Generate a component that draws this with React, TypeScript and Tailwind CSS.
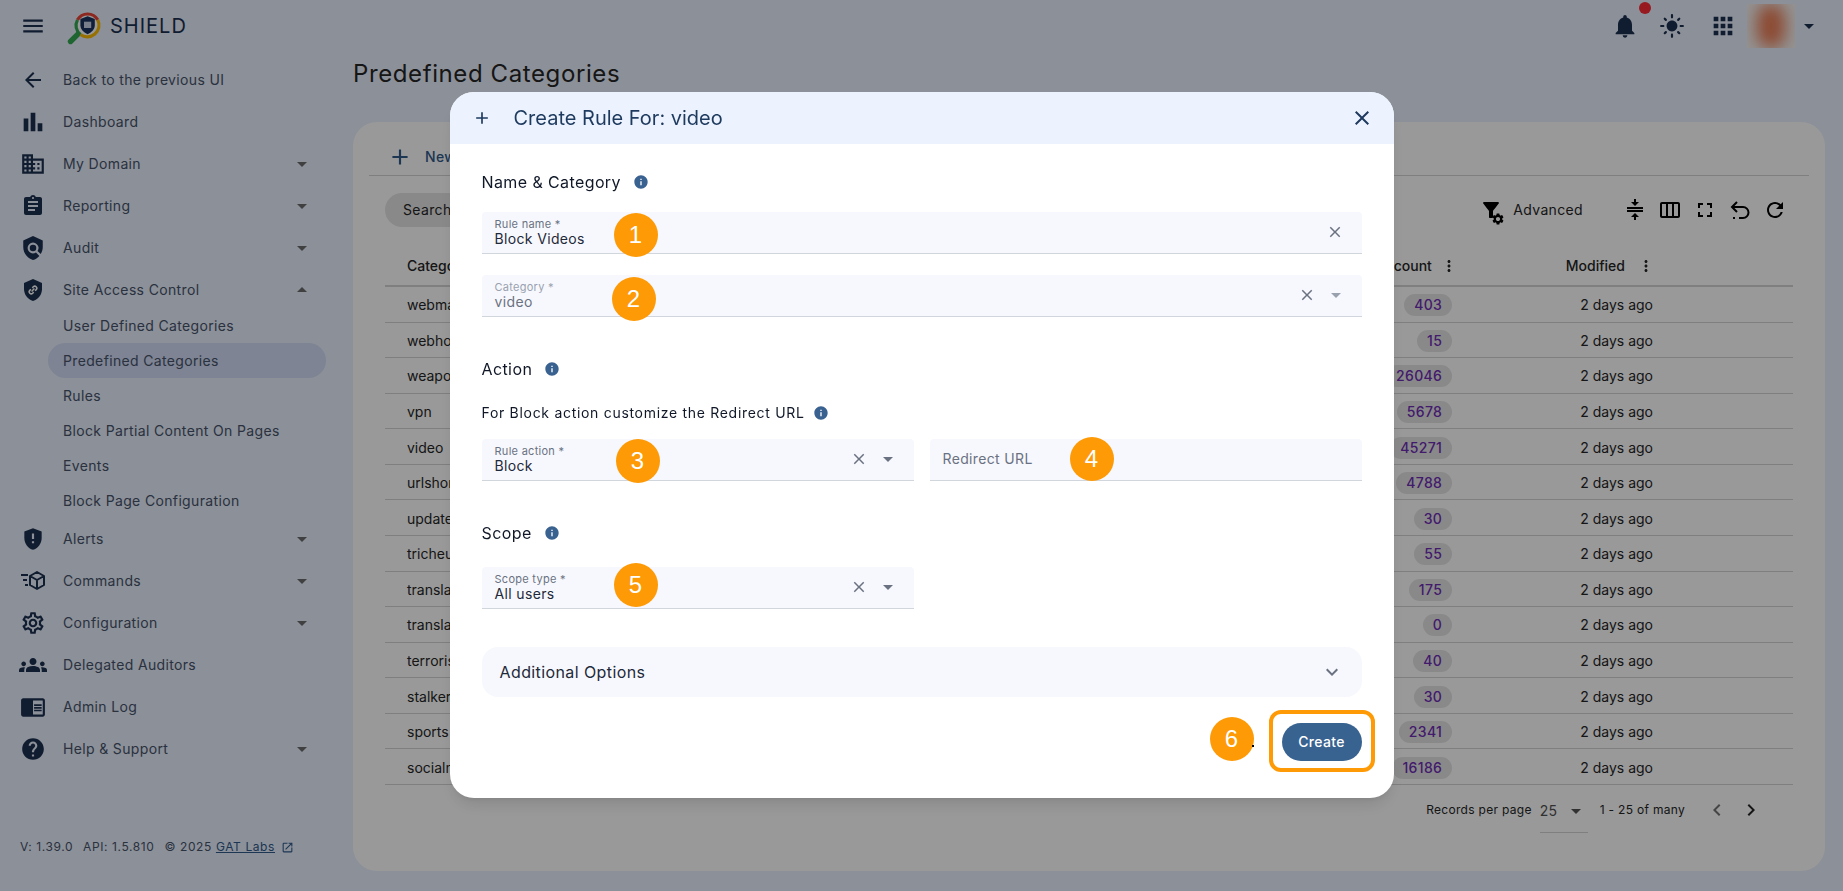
import type { ReactNode } from "react";
import {
  MdAdd,
  MdApps,
  MdArrowBack,
  MdArrowDropDown,
  MdArrowDropUp,
  MdAssignment,
  MdBarChart,
  MdChevronLeft,
  MdChevronRight,
  MdChromeReaderMode,
  MdClose,
  MdCompress,
  MdDomain,
  MdExpandMore,
  MdFilterAlt,
  MdFullscreen,
  MdGppMaybe,
  MdGroups,
  MdHelp,
  MdInfo,
  MdLightMode,
  MdMenu,
  MdMoreVert,
  MdNotifications,
  MdOpenInNew,
  MdOutlineSettings,
  MdOutlineViewWeek,
  MdPolicy,
  MdRefresh,
  MdSettings,
  MdShield,
} from "react-icons/md";

const font = { fontFamily: "Inter, 'Noto Sans', sans-serif" };

function ShieldLogo() {
  return (
    <svg viewBox="0 0 40 40" className="h-9 w-9">
      <path d="M13 27 L5 35" stroke="#34a853" strokeWidth="6" strokeLinecap="round" />
      <circle cx="24" cy="17" r="13" fill="#fff" />
      <path d="M12.7 11 A13 13 0 0 1 35.3 11" fill="none" stroke="#ea4335" strokeWidth="3.5" />
      <path d="M35.3 11 A13 13 0 0 1 16 27.3" fill="none" stroke="#fbbc04" strokeWidth="3.5" />
      <path d="M16 27.3 A13 13 0 0 1 12.7 11" fill="none" stroke="#34a853" strokeWidth="3.5" />
      <path d="M24 7 L32 10 V17 C32 22 28 25 24 27 C20 25 16 22 16 17 V10 Z" fill="#1c3560" />
      <path d="M20 13 H28 V20 H20 Z" fill="#c9d3e6" />
    </svg>
  );
}

function LinkShield() {
  return (
    <div className="relative flex h-6 w-6 items-center justify-center">
      <MdShield size={26} />
      <svg viewBox="0 0 24 24" className="absolute h-3 w-3 -rotate-45 text-white" fill="none" stroke="currentColor" strokeWidth="3">
        <path d="M10 8H7a4 4 0 0 0 0 8h3M14 8h3a4 4 0 0 1 0 8h-3M8 12h8" />
      </svg>
    </div>
  );
}

function CommandsIcon() {
  return (
    <svg viewBox="0 0 26 24" className="h-6 w-7" fill="none" stroke="currentColor" strokeWidth="2">
      <path d="M1 6h7M3 11h4M5 16h3" />
      <path d="M17 3l7 4v9l-7 4-7-4V7zM10 7l7 4 7-4M17 11v9" strokeLinejoin="round" />
    </svg>
  );
}

function ResetIcon() {
  return (
    <svg viewBox="0 0 24 24" className="h-6 w-6" fill="none" stroke="currentColor" strokeWidth="2">
      <path d="M5 9h10a5 5 0 0 1 0 11h-4" />
      <path d="M9 4L4 9l5 5" />
      <path d="M5 20h2" strokeDasharray="2 2" />
    </svg>
  );
}

function NavRow({ icon, label, caret }: { icon: ReactNode; label: string; caret?: "up" | "down" }) {
  return (
    <div className="flex h-10.5 items-center text-[#47536a]">
      <div className="flex w-14 justify-center pl-2.5 text-[#1c3050]">{icon}</div>
      <span className="ml-1.75 flex-1 text-sm tracking-wide">{label}</span>
      {caret === "down" && <MdArrowDropDown size={24} className="mr-9.5 text-[#6b6b6b]" />}
      {caret === "up" && <MdArrowDropUp size={24} className="mr-9.5 text-[#6b6b6b]" />}
    </div>
  );
}

function SubRow({ label, active }: { label: string; active?: boolean }) {
  return (
    <div
      className={`ml-12 mr-6.5 flex h-8.75 items-center rounded-full pl-3.75 text-sm tracking-wide text-[#47536a] ${
        active ? "bg-[#d2dcf6]" : ""
      }`}
    >
      {label}
    </div>
  );
}

const rows = [
  ["webmail", "403"],
  ["webhosting", "15"],
  ["weapons", "26046"],
  ["vpn", "5678"],
  ["video", "45271"],
  ["urlshortener", "4788"],
  ["updates", "30"],
  ["tricheur", "55"],
  ["translation", "175"],
  ["translate", "0"],
  ["terrorism", "40"],
  ["stalkerware", "30"],
  ["sports", "2341"],
  ["socialnetwork", "16186"],
];

function Sidebar() {
  return (
    <aside className="flex w-88 shrink-0 flex-col">
      <div className="h-14 shrink-0" />
      <div className="mt-0.75">
        <NavRow icon={<MdArrowBack size={24} />} label="Back to the previous UI" />
        <NavRow icon={<MdBarChart size={28} />} label="Dashboard" />
        <NavRow icon={<MdDomain size={26} />} label="My Domain" caret="down" />
        <NavRow icon={<MdAssignment size={24} />} label="Reporting" caret="down" />
        <NavRow icon={<MdPolicy size={26} />} label="Audit" caret="down" />
        <NavRow icon={<LinkShield />} label="Site Access Control" caret="up" />
        <div className="-mt-0.75">
          <SubRow label="User Defined Categories" />
          <SubRow label="Predefined Categories" active />
          <SubRow label="Rules" />
          <SubRow label="Block Partial Content On Pages" />
          <SubRow label="Events" />
          <SubRow label="Block Page Configuration" />
        </div>
        <NavRow icon={<MdGppMaybe size={26} />} label="Alerts" caret="down" />
        <NavRow icon={<CommandsIcon />} label="Commands" caret="down" />
        <NavRow icon={<MdOutlineSettings size={26} />} label="Configuration" caret="down" />
        <NavRow icon={<MdGroups size={28} />} label="Delegated Auditors" />
        <NavRow icon={<MdChromeReaderMode size={26} />} label="Admin Log" />
        <NavRow icon={<MdHelp size={26} />} label="Help & Support" caret="down" />
      </div>
      <div className="mt-auto mb-9 flex items-center gap-2.5 pl-5 text-xs tracking-wider text-[#47536a]">
        <span>V: 1.39.0</span>
        <span>API: 1.5.810</span>
        <span className="flex items-center gap-1">
          © 2025 <span className="text-[#2f5a8a] underline">GAT Labs</span>
          <MdOpenInNew size={13} className="ml-0.5 text-[#2f5a8a]" />
        </span>
      </div>
    </aside>
  );
}

function TopBar() {
  return (
    <header className="absolute inset-x-0 top-0 flex h-13 items-center">
      <MdMenu size={26} className="ml-5 text-[#1c3050]" />
      <div className="ml-5 mt-1">
        <ShieldLogo />
      </div>
      <span className="ml-2 text-xl tracking-wider text-[#1c3050]">SHIELD</span>
      <div className="ml-auto flex items-center text-[#1c3050]">
        <div className="relative mr-5">
          <MdNotifications size={28} />
          <span className="absolute -top-2.5 -right-3 h-3 w-3 rounded-full bg-red-500" />
        </div>
        <MdLightMode size={26} className="mr-6" />
        <MdApps size={28} className="mr-2.5" />
        <div className="relative h-11 w-12 overflow-hidden bg-neutral-100">
          <div className="absolute inset-x-2.5 inset-y-0 rounded-full bg-[#ea7a52] blur-sm" />
        </div>
        <MdArrowDropDown size={24} className="mr-5.5 ml-0.5" />
      </div>
    </header>
  );
}

function Table() {
  return (
    <div className="flex h-full flex-col rounded-3xl bg-white px-4">
      <div className="flex h-13.5 shrink-0 items-center gap-3 border-b border-neutral-300 pt-4 pl-4.5 text-[#2f5a8a]">
        <MdAdd size={26} />
        <span className="text-sm font-medium tracking-wide">New Category</span>
      </div>
      <div className="flex h-17 shrink-0 items-center px-4">
        <div className="flex h-8.5 w-64 items-center rounded-full bg-neutral-200 px-4.5 text-sm tracking-wide text-neutral-800">Search</div>
        <div className="ml-auto flex items-center text-black">
          <div className="relative mr-2.5 h-6 w-6">
            <MdFilterAlt size={24} />
            <MdSettings size={14} className="absolute -right-0.5 -bottom-1" />
          </div>
          <span className="mr-10 text-sm tracking-wide text-neutral-800">Advanced</span>
          <div className="flex items-center gap-2.75 pr-1.5">
            <MdCompress size={24} />
            <MdOutlineViewWeek size={24} />
            <MdFullscreen size={24} />
            <ResetIcon />
            <MdRefresh size={24} />
          </div>
        </div>
      </div>
      <div className="mx-4 flex h-10.75 shrink-0 items-center border-b-2 border-neutral-300 pt-0.5 text-sm font-medium text-neutral-800">
        <span className="pl-5.5">Category</span>
        <span className="ml-auto">Keyword count</span>
        <MdMoreVert size={18} className="mr-27 ml-2" />
        <span>Modified</span>
        <MdMoreVert size={18} className="mr-34.5 ml-3" />
      </div>
      <div className="mx-4 grid h-124.5 grid-rows-14">
        {rows.map(([name, count]) => (
          <div key={name} className="flex items-center border-b border-neutral-300 pt-0.5 text-sm text-neutral-800">
            <span className="pl-5.5">{name}</span>
            <span className="ml-auto mr-32 rounded-full bg-neutral-200 px-2.5 text-sm leading-5.5 font-medium tracking-wide text-[#6f2db5]">
              {count}
            </span>
            <span className="mr-35">2 days ago</span>
          </div>
        ))}
      </div>
      <div className="mx-4 flex h-11.5 items-center justify-end pt-1 text-xs tracking-wide text-neutral-800">
        <span>Records per page</span>
        <div className="ml-2 flex h-11 w-12 items-center justify-between self-start border-b border-neutral-300 text-sm text-neutral-600">
          25 <MdArrowDropDown size={24} />
        </div>
        <span className="ml-3">1 - 25 of many</span>
        <MdChevronLeft size={24} className="ml-5 text-neutral-500" />
        <MdChevronRight size={24} className="ml-2.5 mr-7.5" />
      </div>
    </div>
  );
}

function Marker({ n, className }: { n: number; className: string }) {
  return (
    <div className={`absolute flex h-11 w-11 items-center justify-center rounded-full bg-[#fd9a06] font-['Liberation_Sans'] text-2xl text-white ${className}`}>
      {n}
    </div>
  );
}

function Field({
  label,
  value,
  disabled,
  clear,
  caret,
  marker,
}: {
  label?: string;
  value: string;
  disabled?: boolean;
  clear?: boolean;
  caret?: boolean;
  marker?: ReactNode;
}) {
  return (
    <div className="relative flex h-10.5 items-center rounded-t border-b border-gray-300 bg-[#f7f8fd] pr-3.5 pl-3.25">
      <div className="flex-1">
        {label && (
          <div className={`text-[11px] leading-3.5 tracking-wide ${disabled ? "text-gray-400" : "text-gray-500"}`}>{label}</div>
        )}
        <div
          className={`text-sm leading-4 tracking-wide ${
            disabled ? "text-gray-500" : label ? "text-gray-800" : "text-gray-500"
          }`}
        >
          {value}
        </div>
      </div>
      {clear && <MdClose size={18} className={`text-gray-500 ${caret ? "" : "mr-1"}`} />}
      {caret && <MdArrowDropDown size={24} className={`ml-2 ${disabled ? "text-gray-400" : "text-gray-500"}`} />}
      {marker}
    </div>
  );
}

function SectionTitle({ children }: { children: ReactNode }) {
  return (
    <div className="flex items-center gap-3 text-base tracking-wide text-gray-900">
      {children}
      <MdInfo size={16} className="text-[#3a6290]" />
    </div>
  );
}

function RuleDialog() {
  return (
    <div className="fixed inset-0 flex items-center justify-center bg-black/40 pb-0.5">
      <div className="flex h-176.5 w-236 flex-col overflow-hidden rounded-3xl bg-white shadow-lg">
        <div className="flex h-13 shrink-0 items-center bg-[#ecf3fe] pr-5 pl-5.5 text-[#1e3a5f]">
          <MdAdd size={20} />
          <span className="ml-5.5 text-xl">Create Rule For: video</span>
          <MdClose size={24} className="ml-auto" />
        </div>
        <div className="flex flex-1 flex-col px-8 pt-6.5">
          <SectionTitle>Name &amp; Category</SectionTitle>
          <div className="mt-4.5">
            <Field label="Rule name *" value="Block Videos" clear marker={<Marker n={1} className="top-px left-33" />} />
          </div>
          <div className="mt-5.25">
            <Field
              label="Category *"
              value="video"
              disabled
              clear
              caret
              marker={<Marker n={2} className="top-0.5 left-32.5" />}
            />
          </div>
          <div className="mt-10">
            <SectionTitle>Action</SectionTitle>
          </div>
          <div className="mt-5.5 flex items-center gap-2 text-sm tracking-wider text-gray-900">
            For Block action customize the Redirect URL
            <MdInfo size={16} className="text-[#3a6290]" />
          </div>
          <div className="mt-4 grid grid-cols-2 gap-4">
            <Field label="Rule action *" value="Block" clear caret marker={<Marker n={3} className="top-0 left-33.5" />} />
            <Field value="Redirect URL" marker={<Marker n={4} className="-top-0.5 left-35" />} />
          </div>
          <div className="mt-10">
            <SectionTitle>Scope</SectionTitle>
          </div>
          <div className="mt-5.5 grid grid-cols-2 gap-4">
            <Field label="Scope type *" value="All users" clear caret marker={<Marker n={5} className="-top-1 left-33" />} />
          </div>
          <div className="mt-9.5 flex h-12.5 shrink-0 items-center rounded-2xl bg-[#f7f8fd] pr-4.5 pl-4.5 text-base tracking-wide text-gray-800">
            Additional Options
            <MdExpandMore size={24} className="ml-auto text-gray-500" />
          </div>
          <div className="relative mt-6.5 flex justify-end">
            <button className="h-9.5 w-20 rounded-full bg-[#386290] text-sm font-medium tracking-wide text-white">Create</button>
            <div className="absolute -top-3.25 -right-3.25 h-15.5 w-26.5 rounded-xl border-4 border-[#fd9a06]" />
            <Marker n={6} className="-top-1.5 right-27" />
            <span className="absolute top-5.5 right-27 h-0.5 w-0.5 bg-black" />
          </div>
        </div>
      </div>
    </div>
  );
}

export default function App() {
  return (
    <div className="relative flex h-screen w-full overflow-hidden bg-[#e9f0fe]" style={font}>
      <Sidebar />
      <TopBar />
      <main className="flex min-w-0 flex-1 flex-col pr-4.5 pl-px">
        <div className="flex h-30.5 shrink-0 items-start pt-14.5">
          <h1 className="text-2xl tracking-wide text-neutral-800">Predefined Categories</h1>
        </div>
        <div className="mb-5 min-h-0 flex-1">
          <Table />
        </div>
      </main>
      <RuleDialog />
    </div>
  );
}
